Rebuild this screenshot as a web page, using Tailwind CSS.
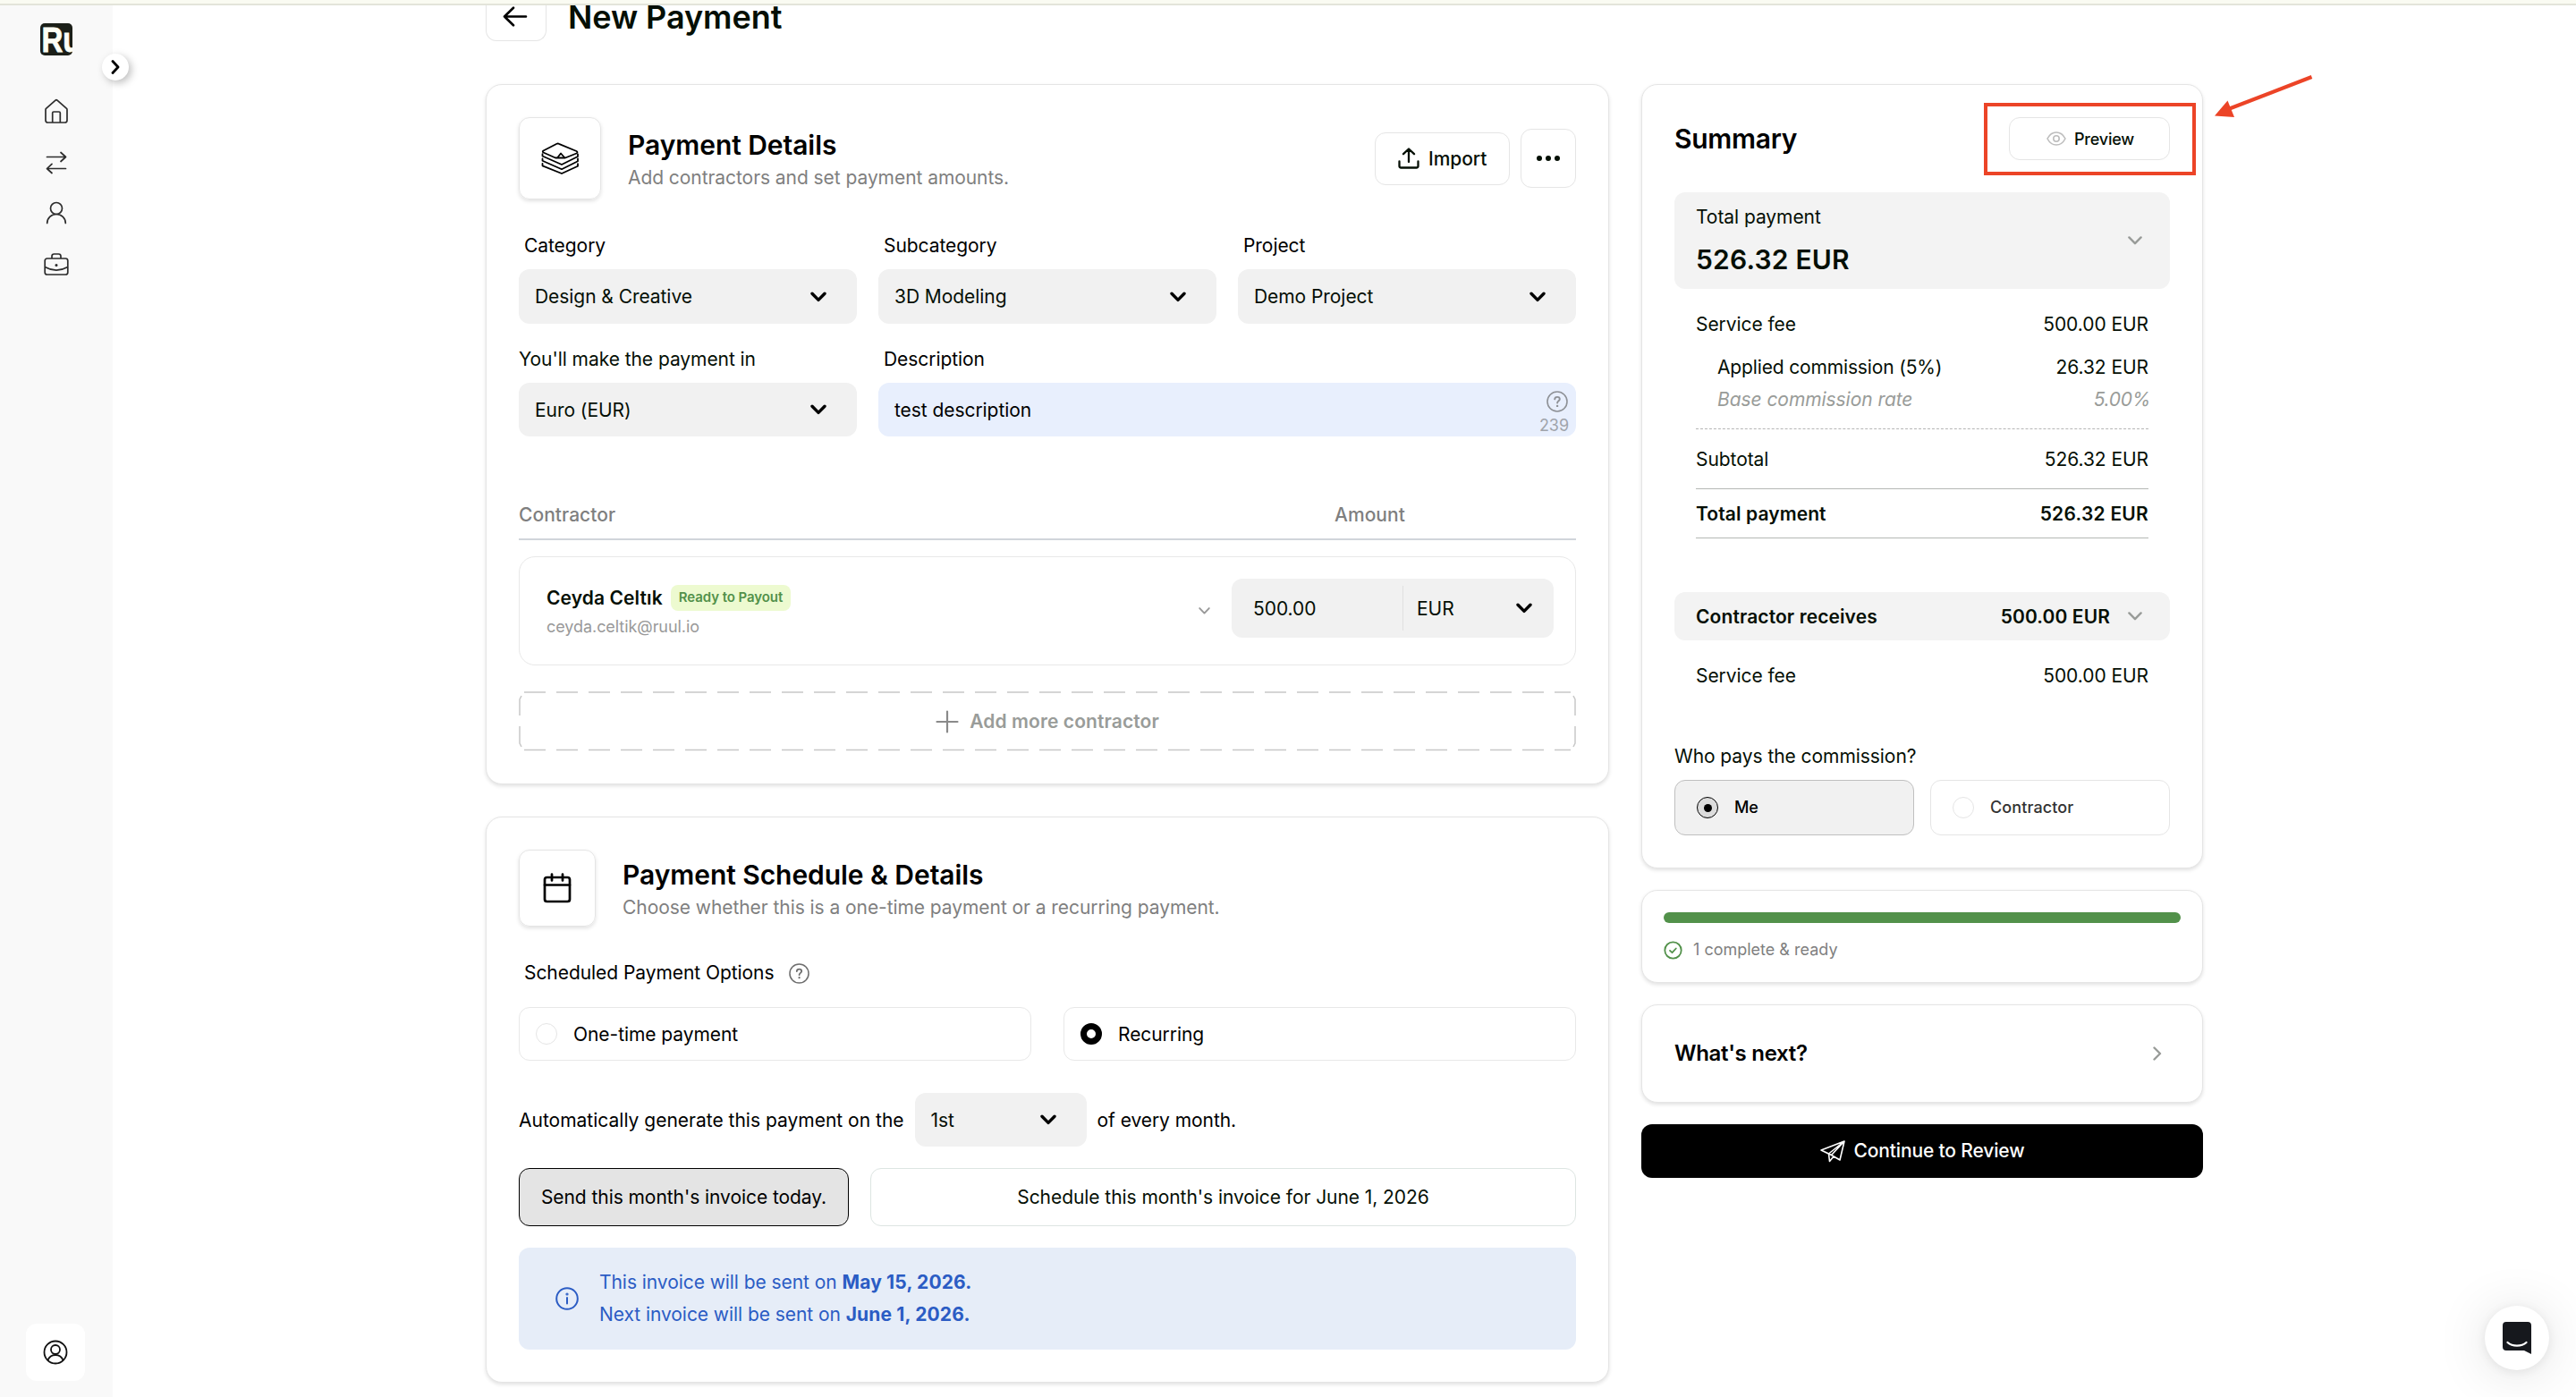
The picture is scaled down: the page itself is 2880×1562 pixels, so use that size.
<!DOCTYPE html>
<html lang="en">
<head>
  <meta charset="UTF-8" />
  <title>New Payment</title>
  <script src="https://cdn.jsdelivr.net/npm/@tailwindcss/browser@4"></script>
</head>
<body
  class="relative flex h-[1562px] w-[2880px] flex-col overflow-hidden bg-white font-['Inter',sans-serif] text-[21px] leading-8 tracking-[-0.06px] text-[#050f05]"
>
  <!-- shared icons -->
  <svg class="hidden">
    <symbol id="chevron" viewBox="0 0 18 12">
      <path d="M2 2.2 9 9.4 16 2.2" fill="none" stroke="currentColor" stroke-width="3.4" stroke-linecap="round" stroke-linejoin="round" />
    </symbol>
    <symbol id="chevron-thin" viewBox="0 0 16 10">
      <path d="M1.4 1.4 8 8.2 14.6 1.4" fill="none" stroke="currentColor" stroke-width="2.4" stroke-linecap="round" stroke-linejoin="round" />
    </symbol>
    <symbol id="help" viewBox="0 0 24 24">
      <g fill="none" stroke="currentColor" stroke-width="1.6" stroke-linecap="round">
        <circle cx="12" cy="12" r="11" />
        <path d="M9.2 9.4c.1-1.6 1.3-2.500 2.800-2.500 1.600 0 2.800 1 2.800 2.400 0 2-2.700 2.100-2.700 4.300" stroke-width="1.9" />
      </g>
      <circle cx="12.1" cy="16.9" r="1.2" fill="currentColor" />
    </symbol>
  </svg>

  <div class="h-1.5 w-full shrink-0 border-b-2 border-[#e3e4da] bg-[#fafbf2]"></div>

  <div class="flex min-h-0 flex-1">
    <aside class="relative flex w-[126px] shrink-0 flex-col items-center bg-[#f9f9f9] pt-5 text-[#2d2d2d]">
      <svg class="size-9" viewBox="0 0 36 36">
        <clipPath id="logoClip"><rect width="36" height="36" rx="5" /></clipPath>
        <g clip-path="url(#logoClip)">
          <rect width="36" height="36" fill="#1b1f18" />
          <text transform="translate(1.6 32) scale(.86 1)" fill="#fdfff5" font-family="Liberation Sans" font-weight="700" font-size="38.5" stroke="#fdfff5" stroke-width=".8">R</text>
          <text transform="translate(25.2 32) scale(.86 1)" fill="#fdfff5" font-family="Liberation Sans" font-weight="700" font-size="38.5" stroke="#fdfff5" stroke-width=".8">u</text>
        </g>
      </svg>
      <nav class="mt-[46px] flex flex-col items-center gap-[25.5px]">
        <svg class="size-8" viewBox="0 0 32 32" fill="none" stroke="currentColor" stroke-width="1.7" stroke-linejoin="round">
          <path d="M4.5 13.4 15 4.2q1-.9 2 0l10.500 9.200q.5.5.5 1.300V26.500q0 2.500-2.500 2.500h-19Q4 29 4 26.500V14.700q0-.8.5-1.300Z" />
          <path d="M11.700 29V18.300q0-1.300 1.300-1.300h6q1.300 0 1.300 1.300V29" />
        </svg>
        <svg class="size-8" viewBox="0 0 32 32" fill="none" stroke="currentColor" stroke-width="1.700" stroke-linecap="round" stroke-linejoin="round">
          <path d="M5.500 9.500h21M21 4.500l5.500 5-5.500 5M26.500 22.500h-21M11 17.300l-5.500 5.200 5.500 5" />
        </svg>
        <svg class="size-8" viewBox="0 0 32 32" fill="none" stroke="currentColor" stroke-width="1.700" stroke-linecap="round">
          <circle cx="16" cy="10" r="6.500" />
          <path d="M5.700 26.500c0-5.800 4.600-10 10.300-10s10.300 4.200 10.300 10" />
        </svg>
        <svg class="size-8" viewBox="0 0 32 32" fill="none" stroke="currentColor" stroke-width="1.700" stroke-linejoin="round">
          <rect x="3.200" y="8" width="25.600" height="18" rx="2.500" />
          <path d="M11 8V5.500Q11 3 13.500 3h5Q21 3 21 5.500V8M3.200 17.500c8 4.500 17.600 4.500 25.600 0" />
          <circle cx="16" cy="15.500" r=".7" fill="currentColor" />
        </svg>
      </nav>
      <div class="mt-auto mr-0.5 mb-[18px] flex h-[64px] w-[66px] items-center justify-center rounded-xl bg-white">
        <svg class="size-7" viewBox="0 0 28 28" fill="none" stroke="#111" stroke-width="1.800">
          <circle cx="14" cy="14" r="12.500" />
          <circle cx="14" cy="11" r="5" />
          <path d="M5.500 23c1.500-4 4.700-6 8.500-6s7 2 8.500 6" />
        </svg>
      </div>
      <button class="absolute top-[54px] left-[114px] flex size-[30px] items-center justify-center rounded-full bg-white text-black shadow-[3px_3px_8px_rgba(0,0,0,0.25)]">
        <svg class="h-4 w-2.5" viewBox="0 0 10 16"><path d="M2 1.500 8 8 2 14.500" fill="none" stroke="currentColor" stroke-width="2.800" stroke-linecap="round" stroke-linejoin="round" /></svg>
      </button>
    </aside>

    <main class="flex-1 pl-[417px]">
      <header class="flex h-10">
        <div class="flex h-10 w-[68px] justify-center rounded-b-xl border border-t-0 border-[#e5e5e5]">
          <svg class="mr-0.5 h-6 w-[28px]" viewBox="0 0 28 24" fill="none" stroke="#000" stroke-width="2.600" stroke-linecap="round" stroke-linejoin="round">
            <path d="M26 12.500H2M12 2.700 2 12.500l10 9.800" />
          </svg>
        </div>
        <h1 class="ml-[24px] text-[36px] leading-[26px] font-semibold">New Payment</h1>
      </header>

      <div class="mt-12 flex items-start gap-9">
        <div class="flex w-[1256px] flex-col gap-9">
          <!-- payment details -->
          <section class="h-[783px] rounded-[18px] border border-[#e5e5e5] bg-white p-9 shadow-[0_2px_4px_rgba(0,0,0,0.12)]">
            <div class="flex h-[92px] items-center">
              <div class="flex size-[92px] items-center justify-center rounded-xl border border-[#e5e5e5] shadow-[0_2px_4px_rgba(0,0,0,0.12)]">
                <svg class="h-9 w-[44px]" viewBox="0 0 44 36" fill="none" stroke="#000" stroke-width="1.800" stroke-linejoin="round" stroke-linecap="round">
                  <path d="M3.500 9.500 18.500 1.800q1.200-.6 2.400 0L40.500 10q2 1.200 0 2.500L28 17.500H17L3.500 11.500q-1.500-1 0-2Z" />
                  <path d="m19.500 17 3.500-4.500 4 4.500" />
                  <path d="M2.500 13.200v2.300L24 25l18-9v-2.700M2.500 18.500v2.300L24 30.200l18-9v-2.700M2.500 23.800v2.500L24 35l18-8.300v-2.500" />
                </svg>
              </div>
              <div class="ml-[30px] self-start pt-3">
                <h2 class="text-[30px] leading-[38px] font-semibold text-black">Payment Details</h2>
                <p class="leading-9 text-[#7f7f7f]">Add contractors and set payment amounts.</p>
              </div>
              <button class="ml-auto flex h-[59px] w-[151px] items-center gap-[10px] rounded-xl border border-[#e5e5e5] pl-[25px] font-medium">
                <svg class="size-6" viewBox="0 0 24 24" fill="none" stroke="currentColor" stroke-width="2.300" stroke-linecap="round" stroke-linejoin="round">
                  <path d="M12 16V1.800M6 7.200l6-5.700 6 5.700M1.500 15.500v5q0 2 2 2h17q2 0 2-2v-5" />
                </svg>
                <span class="pt-0.5">Import</span>
              </button>
              <button class="ml-3 flex h-[66px] w-[62px] items-center justify-center gap-1 rounded-xl border border-[#e5e5e5]">
                <span class="size-[6px] rounded-full bg-[#050f05]"></span>
                <span class="size-[6px] rounded-full bg-[#050f05]"></span>
                <span class="size-[6px] rounded-full bg-[#050f05]"></span>
              </button>
            </div>

            <div class="mt-9 grid grid-cols-3 gap-x-6">
              <div>
                <div class="pl-1.5 text-black">Category</div>
                <div class="mt-[10px] flex h-[61px] items-center justify-between rounded-xl bg-[#f1f1f1] pr-[34px] pl-[18px]">
                  <span class="pt-px">Design &amp; Creative</span>
                  <svg class="h-3 w-[18px] text-black"><use href="#chevron" /></svg>
                </div>
              </div>
              <div>
                <div class="pl-1.5 text-black">Subcategory</div>
                <div class="mt-[10px] flex h-[61px] items-center justify-between rounded-xl bg-[#f1f1f1] pr-[34px] pl-[18px]">
                  <span class="pt-px">3D Modeling</span>
                  <svg class="h-3 w-[18px] text-black"><use href="#chevron" /></svg>
                </div>
              </div>
              <div>
                <div class="pl-1.5 text-black">Project</div>
                <div class="mt-[10px] flex h-[61px] items-center justify-between rounded-xl bg-[#f1f1f1] pr-[34px] pl-[18px]">
                  <span class="pt-px">Demo Project</span>
                  <svg class="h-3 w-[18px] text-black"><use href="#chevron" /></svg>
                </div>
              </div>
            </div>

            <div class="mt-6 grid grid-cols-3 gap-x-6">
              <div>
                <div>You'll make the payment in</div>
                <div class="mt-[10px] flex h-[60px] items-center justify-between rounded-xl bg-[#f1f1f1] pr-[34px] pl-[18px]">
                  <span class="pt-0.5">Euro (EUR)</span>
                  <svg class="h-3 w-[18px] text-black"><use href="#chevron" /></svg>
                </div>
              </div>
              <div class="col-span-2 text-black">
                <div class="pl-1.5">Description</div>
                <div class="mt-[10px] flex h-[60px] items-center justify-between rounded-xl bg-[#e8effd] pr-2 pl-[18px]">
                  <span class="pt-0.5">test description</span>
                  <div class="flex h-full flex-col items-end pt-[9px] text-[18px] leading-6 text-[#a0a4ab]">
                    <svg class="mr-px size-6 text-[#8e9196]"><use href="#help" /></svg>
                    <span class="mt-[5px] leading-[20px]">239</span>
                  </div>
                </div>
              </div>
            </div>

            <div class="mt-[72px] flex h-11 border-b-2 border-[#d1d5db] font-medium tracking-[0.05px] text-[#7f7f7f]">
              <span class="w-[912px]">Contractor</span>
              <span>Amount</span>
            </div>

            <div class="mt-[18px] flex h-[122px] items-center rounded-[18px] border border-[#e8e8e8] pr-6 pl-[30px]">
              <div>
                <div class="flex h-[30px] items-center gap-[9px]">
                  <span class="pt-px font-semibold tracking-[0.1px]">Ceyda Celtık</span>
                  <span class="flex h-[29px] items-center rounded-lg bg-[#edfad0] px-[9px] text-[15px] font-semibold text-[#52914a]">Ready to Payout</span>
                </div>
                <div class="mt-1.5 text-[18px] leading-6 text-[#999]">ceyda.celtik@ruul.io</div>
              </div>
              <svg class="mr-6 ml-auto h-2 w-[13px] text-[#999]" viewBox="0 0 16 10"><use href="#chevron-thin" width="16" height="10" /></svg>
              <div class="mb-1.5 flex h-[66px] w-[360px] items-center rounded-xl bg-[#f1f1f1] py-2 pr-6 pl-[24px]">
                <span class="w-[167px] pt-px">500.00</span>
                <span class="flex h-full flex-1 items-center justify-between border-l border-[#e0e0e0] pl-[15px]">
                  <span class="pt-px">EUR</span>
                  <svg class="h-3 w-[18px] text-black"><use href="#chevron" /></svg>
                </span>
              </div>
            </div>

            <button class="relative mt-[29px] flex h-[67px] w-full items-center justify-center gap-3 font-semibold tracking-[0.1px] text-[#999c99]">
              <svg class="absolute inset-0 size-full" fill="none" stroke="#c8c8c8" stroke-width="1.500">
                <path d="M6 1H1176M6 65.500H1176" stroke-dasharray="24 12" />
                <path d="M1 27V9l2-4M1 39v19l2 4M1181 27V9l-2-4M1181 39v19l-2 4" />
              </svg>
              <svg class="size-[26px]" viewBox="0 0 26 26" stroke="#8a8a8a" stroke-width="2.200" stroke-linecap="round"><path d="M13 1.500v23M1.500 13h23" /></svg>
              Add more contractor
            </button>
          </section>

          <!-- schedule -->
          <section class="h-[633px] rounded-[18px] border border-[#e5e5e5] bg-white p-9 text-black shadow-[0_2px_4px_rgba(0,0,0,0.12)]">
            <div class="flex h-[86px]">
              <div class="flex size-[86px] items-center justify-center rounded-xl border border-[#e5e5e5] shadow-[0_2px_4px_rgba(0,0,0,0.12)]">
                <svg class="h-[34px] w-8" viewBox="0 0 32 34" fill="none" stroke="#000" stroke-width="2.700" stroke-linecap="round" stroke-linejoin="round">
                  <rect x="2" y="5" width="28" height="27" rx="2.500" />
                  <path d="M2 13.500h28M10 1.500v7M22 1.500v7" />
                </svg>
              </div>
              <div class="ml-[30px] pt-[9px]">
                <h2 class="text-[30px] leading-[38px] font-semibold">Payment Schedule &amp; Details</h2>
                <p class="leading-[35px] text-[#7f7f7f]">Choose whether this is a one-time payment or a recurring payment.</p>
              </div>
            </div>

            <div class="mt-9 flex items-center pl-1.5">
              Scheduled Payment Options
              <svg class="mt-px ml-[17px] size-[23px] text-[#6f6f6f]" viewBox="0 0 24 24"><use href="#help" width="24" height="24" /></svg>
            </div>

            <div class="mt-[22px] grid grid-cols-2 gap-9">
              <label class="flex h-[60px] items-center gap-[18px] rounded-xl border border-[#e8e8e8] pl-[18px]">
                <span class="size-6 rounded-full border border-[#e5e5e5]"></span>
                <span class="pt-px">One-time payment</span>
              </label>
              <label class="flex h-[60px] items-center gap-[18px] rounded-xl border border-[#e8e8e8] pl-[18px]">
                <span class="size-6 rounded-full border-[7.500px] border-black bg-white"></span>
                <span class="pt-px">Recurring</span>
              </label>
            </div>

            <div class="mt-9 flex h-[60px] items-center gap-3">
              <span class="pt-px tracking-normal">Automatically generate this payment on the</span>
              <div class="flex h-[60px] w-[192px] items-center justify-between rounded-xl bg-[#f1f1f1] pr-[34px] pl-[18px] text-[#050f05]">
                <span class="pt-px">1st</span>
                <svg class="h-3 w-[18px] text-black"><use href="#chevron" /></svg>
              </div>
              <span class="pt-px">of every month.</span>
            </div>

            <div class="mt-6 flex h-[65px] gap-6">
              <button class="w-[369px] rounded-xl border border-black bg-[#e4e4e4]">Send this month's invoice today.</button>
              <button class="flex-1 rounded-xl border border-[#dde5e2] text-[#050f05]">Schedule this month's invoice for June 1, 2026</button>
            </div>

            <div class="mt-6 flex h-[114px] items-center gap-[23px] rounded-xl bg-[#e6edf8] pl-[41px] leading-9 text-[#2b5cc4]">
              <svg class="size-[26px]" viewBox="0 0 26 26" fill="none" stroke="currentColor" stroke-width="2" stroke-linecap="round">
                <circle cx="13" cy="13" r="11.800" />
                <path d="M13 12v6.500" />
                <circle cx="13" cy="8" r=".6" />
              </svg>
              <div>
                <p>This invoice will be sent on <b class="tracking-[0.15px]">May 15, 2026.</b></p>
                <p>Next invoice will be sent on <b class="tracking-[0.15px]">June 1, 2026.</b></p>
              </div>
            </div>
          </section>
        </div>

        <div class="flex w-[628px] flex-col gap-6">
          <!-- summary -->
          <section class="h-[877px] rounded-[18px] border border-[#e5e5e5] bg-white p-9 shadow-[0_2px_4px_rgba(0,0,0,0.12)]">
            <div class="flex h-12 items-center justify-between">
              <h2 class="text-[30px] font-semibold tracking-[-0.3px] text-black">Summary</h2>
              <button class="flex h-12 w-[180px] items-center justify-center gap-[9px] rounded-xl border border-[#e5e5e5] pl-0.5 text-[18px] font-medium">
                <svg class="h-4 w-[22px]" viewBox="0 0 22 16" fill="none" stroke="#bdbdbd" stroke-width="1.600">
                  <path d="M1 8c2.200-4.300 5.800-7 10-7s7.800 2.700 10 7c-2.200 4.300-5.800 7-10 7S3.200 12.300 1 8Z" />
                  <circle cx="11" cy="8" r="3.200" />
                </svg>
                <span class="pt-px tracking-[-0.2px]">Preview</span>
              </button>
            </div>

            <div class="mt-9 flex h-[108px] items-center justify-between rounded-xl bg-[#f3f3f3] pr-[31px] pl-6">
              <div>
                <div>Total payment</div>
                <div class="mt-[10px] text-[30px] leading-[42px] font-semibold tracking-[0.2px]">526.32 EUR</div>
              </div>
              <svg class="h-2.5 w-4 text-[#999c99]"><use href="#chevron-thin" /></svg>
            </div>

            <div class="mx-6 mt-6">
              <div class="flex justify-between"><span>Service fee</span><span>500.00 EUR</span></div>
              <div class="mt-4 flex justify-between pl-6"><span class="tracking-[-0.15px]">Applied commission (5%)</span><span>26.32 EUR</span></div>
              <div class="mt-1 -mr-0.5 flex justify-between pl-6 text-[#999c99] italic"><span>Base commission rate</span><span class="tracking-[-0.3px]">5.00%</span></div>
              <div class="mt-4 border-t border-dashed border-[#b5b5b5] pt-[18px]">
                <div class="flex justify-between"><span>Subtotal</span><span>526.32 EUR</span></div>
              </div>
              <div class="mt-4 flex h-14 justify-between border-y border-[#b5b8b5] pt-3 font-semibold tracking-[0.1px]">
                <span>Total payment</span><span class="tracking-[0.25px]">526.32 EUR</span>
              </div>
            </div>

            <div class="mt-[60px] flex h-[54px] items-center rounded-xl bg-[#f3f3f3] pr-[31px] pl-6 font-semibold tracking-[0.1px]">
              <span class="pt-px">Contractor receives</span>
              <span class="mr-5 ml-auto pt-px">500.00 EUR</span>
              <svg class="h-2.5 w-4 text-[#999c99]"><use href="#chevron-thin" /></svg>
            </div>
            <div class="mx-6 mt-6 flex justify-between"><span>Service fee</span><span>500.00 EUR</span></div>

            <div class="mt-[58px]">Who pays the commission?</div>
            <div class="mt-[10px] grid grid-cols-2 gap-[18px] text-[18px] font-medium">
              <label class="flex h-[62px] items-center gap-[18px] rounded-xl border border-[#bfbfbf] bg-[#f1f1f1] pl-6 text-black">
                <span class="flex size-6 items-center justify-center rounded-full border border-black bg-[#dcdcdc]"><span class="size-[9px] rounded-full bg-black"></span></span>
                Me
              </label>
              <label class="flex h-[62px] items-center gap-[18px] rounded-xl border border-[#e5e5e5] pl-6 tracking-[0.1px] text-[#333]">
                <span class="size-6 rounded-full border border-[#e5e5e5]"></span>
                Contractor
              </label>
            </div>
          </section>

          <section class="h-[104px] rounded-[18px] border border-[#e5e5e5] bg-white p-6 shadow-[0_2px_4px_rgba(0,0,0,0.12)]">
            <div class="h-3 rounded-full bg-[#52914a]"></div>
            <div class="mt-[18px] flex items-center gap-3 text-[18px] leading-6 tracking-normal text-[#7f7f7f]">
              <svg class="size-[21px]" viewBox="0 0 21 21" fill="none" stroke="#52914a" stroke-width="1.800" stroke-linecap="round" stroke-linejoin="round">
                <circle cx="10.500" cy="10.500" r="9.200" />
                <path d="m7 10.800 2.500 2.400 4.300-4.700" />
              </svg>
              1 complete &amp; ready
            </div>
          </section>

          <section class="flex h-[110px] items-center justify-between rounded-[18px] border border-[#e5e5e5] bg-white pr-[45px] pl-9 shadow-[0_2px_4px_rgba(0,0,0,0.12)]">
            <h3 class="text-[24px] font-semibold tracking-[-0.3px] text-black">What's next?</h3>
            <svg class="h-4 w-2.5" viewBox="0 0 10 16"><path d="M1.500 1.500 8 8 1.500 14.500" fill="none" stroke="#999c99" stroke-width="2.400" stroke-linecap="round" stroke-linejoin="round" /></svg>
          </section>

          <button class="flex h-[60px] items-center justify-center gap-[10px] rounded-xl bg-black font-medium tracking-[-0.15px] text-white">
            <svg class="h-[25px] w-7" viewBox="0 0 28 25" fill="none" stroke="#fff" stroke-width="1.600" stroke-linejoin="round">
              <path d="M1 11 27 1l-5 21-9.500-5.500ZM1 11l8.500 4L27 1 12.500 16.500M9.500 15l1 8.500 4.500-5.500" />
            </svg>
            Continue to Review
          </button>
        </div>
      </div>
    </main>
  </div>

  <!-- callout around the preview button -->
  <div class="absolute top-[115px] left-[2218px] h-[81px] w-[237px] border-4 border-[#ec4427]"></div>
  <svg class="absolute top-[80px] left-[2470px] h-[60px] w-[120px]" viewBox="0 0 120 60">
    <path d="M114.500 6 20 42.500" stroke="#ec4427" stroke-width="4.200" />
    <path d="M6 49.500 20.500 32.500 28 51Z" fill="#ec4427" />
  </svg>

  <!-- chat launcher -->
  <div class="absolute top-[1460px] left-[2778px] flex size-[72px] items-center justify-center rounded-full bg-white shadow-[0_2px_12px_rgba(0,0,0,0.08),0_4px_60px_rgba(0,0,0,0.12)]">
    <svg class="h-9 w-8" viewBox="0 0 32 36">
      <path d="M4 0h24q4 0 4 4v32l-8-4H4q-4 0-4-4V4q0-4 4-4Z" fill="#16181d" />
      <path d="M5.500 23c5.500 4.800 15.500 4.800 21 0" fill="none" stroke="#fff" stroke-width="2.300" stroke-linecap="round" />
    </svg>
  </div>
</body>
</html>
